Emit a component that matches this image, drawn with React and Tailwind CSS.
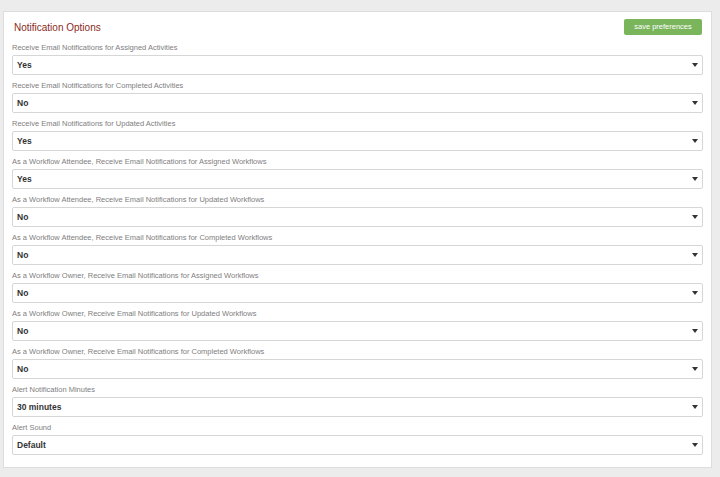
const fields = [
  ["Receive Email Notifications for Assigned Activities", "Yes"],
  ["Receive Email Notifications for Completed Activities", "No"],
  ["Receive Email Notifications for Updated Activities", "Yes"],
  ["As a Workflow Attendee, Receive Email Notifications for Assigned Workflows", "Yes"],
  ["As a Workflow Attendee, Receive Email Notifications for Updated Workflows", "No"],
  ["As a Workflow Attendee, Receive Email Notifications for Completed Workflows", "No"],
  ["As a Workflow Owner, Receive Email Notifications for Assigned Workflows", "No"],
  ["As a Workflow Owner, Receive Email Notifications for Updated Workflows", "No"],
  ["As a Workflow Owner, Receive Email Notifications for Completed Workflows", "No"],
  ["Alert Notification Minutes", "30 minutes"],
  ["Alert Sound", "Default"],
];

export default function App() {
  return (
    <div className="w-[720px] h-[477px] bg-[#ececec] pt-[11px] pl-[3px] overflow-hidden" style={{ fontFamily: "Helvetica, 'Liberation Sans', Arial, sans-serif" }}>
      <div className="w-[709px] bg-white border border-[#dddddd] px-[8px] pt-[7px] pb-[12px]">
        <div className="flex items-center justify-between h-[16px] mb-[7px]">
          <div className="text-[10px] text-[#8a2a22] pl-[2px]">Notification Options</div>
          <div className="w-[78px] h-[16px] bg-[#7ab55c] rounded-[2px] text-white text-[7.5px] flex items-center justify-center mr-[1px]">save preferences</div>
        </div>
        {fields.map(([label, value], i) => (
          <div key={i} className="mb-[5px] last:mb-0">
            <div className="h-[12px] text-[7.5px] text-[#808080] leading-[12px] mb-[1px]">{label}</div>
            <div className="h-[20px] w-[691px] border border-[#d6d6d6] rounded-[2px] flex items-center justify-between px-[4px]">
              <span className="text-[8.5px] font-bold text-[#333]">{value}</span>
              <svg width="6" height="4" viewBox="0 0 6 4"><path d="M0 0h6L3 4z" fill="#333" /></svg>
            </div>
          </div>
        ))}
      </div>
    </div>
  );
}
